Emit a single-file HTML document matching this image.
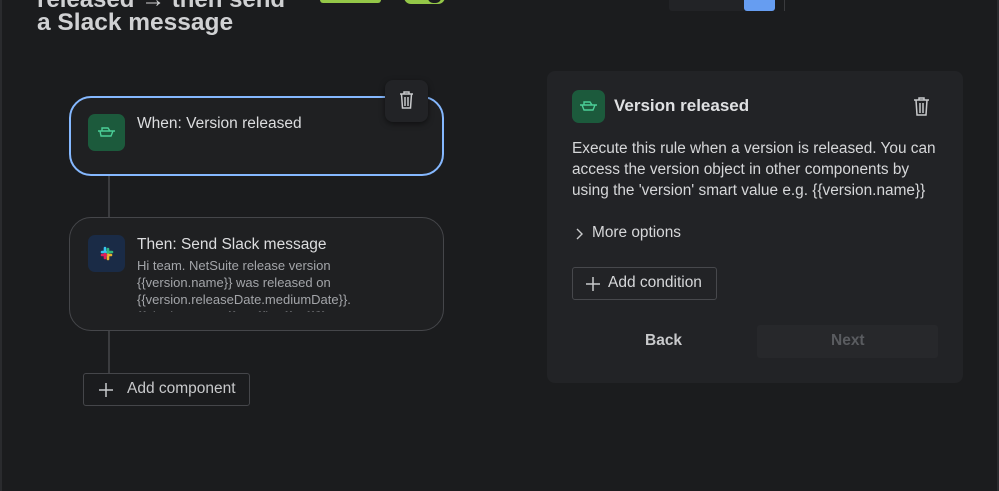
<!DOCTYPE html>
<html><head><meta charset="utf-8"><style>
*{box-sizing:border-box;margin:0;padding:0}
body{width:999px;height:491px;background:#1b1c1e;font-family:"Liberation Sans",sans-serif;color:#d8d9db;position:relative;overflow:hidden}
.abs{position:absolute}
.card{position:absolute;border-radius:22px;background:#1f2022}
.ico{position:absolute;width:37px;height:37px;border-radius:7px}
</style></head><body>
<div class="abs" style="left:0;top:0;width:2px;height:491px;background:#2a2b2e"></div>
<div class="abs" style="left:997px;top:0;width:2px;height:491px;background:#2a2b2e"></div>
<div class="abs" style="left:37px;top:-14px;font-size:24px;font-weight:bold;color:#d0d1d3;white-space:nowrap">released → then send</div>
<div class="abs" style="left:37px;top:9px;font-size:24.5px;font-weight:bold;color:#d0d1d3;white-space:nowrap">a Slack message</div>
<div class="abs" style="left:320px;top:-6px;width:61px;height:9px;background:#94c748;border-radius:3px"></div>
<div class="abs" style="left:404px;top:-10px;width:41px;height:14px;background:#94c748;border-radius:8px"></div>
<div class="abs" style="left:428px;top:-7px;width:13px;height:10px;background:#1b1c1e;border-radius:6px"></div>
<div class="abs" style="left:669px;top:-4px;width:76px;height:15px;background:#222326;border-radius:3px"></div>
<div class="abs" style="left:744px;top:-4px;width:31px;height:15px;background:#669df1;border-radius:3px"></div>
<div class="abs" style="left:784px;top:-2px;width:1px;height:13px;background:#3a3b3e"></div>

<div class="abs" style="left:108px;top:175px;width:2px;height:44px;background:#3b3c3f"></div>
<div class="abs" style="left:108px;top:330px;width:2px;height:44px;background:#3b3c3f"></div>

<div class="card" style="left:69px;top:96px;width:375px;height:80px;border:2px solid #85b8ff"></div>
<div class="ico" style="left:88px;top:114px;background:#1c5a3c">
<svg width="37" height="37" viewBox="0 0 37 37"><path d="M12 17h13l-2 5h-10zM14 17v-3h6l2 3M10 17h17" fill="none" stroke="#4bce97" stroke-width="1.4"/></svg></div>
<div class="abs" style="left:137px;top:115px;font-size:15.5px;color:#dcdddf">When: Version released</div>
<div class="abs" style="left:385px;top:80px;width:43px;height:42px;background:#222326;border-radius:8px;box-shadow:0 2px 6px rgba(0,0,0,.5)">
<svg width="43" height="42" viewBox="0 0 43 42"><path d="M15 14h13M19 14v-2h5v2M16.5 14l1 14h8l1-14M20 17v9M23 17v9" fill="none" stroke="#c8c9cb" stroke-width="1.5"/></svg></div>

<div class="card" style="left:69px;top:217px;width:375px;height:114px;border:1.5px solid #45464a"></div>
<div class="ico" style="left:88px;top:235px;background:#1a2b46">
<svg width="37" height="37" viewBox="0 0 37 37" stroke-linecap="round" stroke-width="2.6"><path d="M14 17h4" stroke="#36c5f0"/><path d="M17 13v4" stroke="#36c5f0"/><path d="M20 14v4" stroke="#2eb67d"/><path d="M20 17h4" stroke="#2eb67d"/><path d="M19 20h4" stroke="#ecb22e"/><path d="M20 20v4" stroke="#ecb22e"/><path d="M17 19v4" stroke="#e01e5a"/><path d="M14 20h4" stroke="#e01e5a"/></svg></div>
<div class="abs" style="left:137px;top:236px;font-size:15.5px;color:#dcdddf">Then: Send Slack message</div>
<div class="abs" style="left:137px;top:257px;width:300px;height:55px;overflow:hidden;font-size:13px;line-height:17px;color:#a3a5a9">Hi team. NetSuite release version<br>{{version.name}} was released on<br>{{version.releaseDate.mediumDate}}.<br>{{#lookupIssues}} - &lt;{{key}}&gt; {{/}}</div>

<div class="abs" style="left:83px;top:373px;width:167px;height:33px;border:1px solid #45464a;border-radius:3px"></div>
<svg class="abs" style="left:97px;top:381px" width="18" height="18"><path d="M9 2v14M2 9h14" stroke="#c8c9cb" stroke-width="1.5"/></svg>
<div class="abs" style="left:127px;top:380px;font-size:15.5px;color:#c8c9cb">Add component</div>

<div class="abs" style="left:547px;top:71px;width:416px;height:312px;background:#222326;border-radius:8px"></div>
<div class="ico" style="left:572px;top:90px;width:33px;height:33px;background:#1c5a3c">
<svg width="33" height="33" viewBox="0 0 33 33"><path d="M10 15h13l-2 5h-9zM12 15v-3h6l2 3M8 15h17" fill="none" stroke="#4bce97" stroke-width="1.4"/></svg></div>
<div class="abs" style="left:614px;top:96px;font-size:17px;font-weight:bold;color:#dfe0e2">Version released</div>
<svg class="abs" style="left:910px;top:95px" width="24" height="24" viewBox="0 0 24 24"><path d="M4 5h15M9 5V3h5v2M6 5l1 15h9l1-15M10 8v10M13 8v10" fill="none" stroke="#c8c9cb" stroke-width="1.5"/></svg>
<div class="abs" style="left:572px;top:138px;width:368px;font-size:15.4px;line-height:21px;color:#d6d7d9">Execute this rule when a version is released. You can access the version object in other components by using the 'version' smart value e.g. {{version.name}}</div>
<svg class="abs" style="left:574px;top:227px" width="10" height="14"><path d="M3 2l5 5-5 5" fill="none" stroke="#c8c9cb" stroke-width="1.4"/></svg>
<div class="abs" style="left:592px;top:224px;font-size:15.4px;color:#d6d7d9">More options</div>
<div class="abs" style="left:572px;top:267px;width:145px;height:33px;border:1px solid #47484c;border-radius:3px"></div>
<svg class="abs" style="left:584px;top:275px" width="18" height="18"><path d="M9 2v14M2 9h14" stroke="#c8c9cb" stroke-width="1.5"/></svg>
<div class="abs" style="left:608px;top:274px;font-size:15.5px;color:#d6d7d9">Add condition</div>
<div class="abs" style="left:645px;top:332px;font-size:15.5px;font-weight:bold;color:#c8c9cb">Back</div>
<div class="abs" style="left:757px;top:325px;width:181px;height:33px;background:#27282b;border-radius:3px"></div>
<div class="abs" style="left:831px;top:332px;font-size:15.5px;font-weight:bold;color:#5a5c60">Next</div>
</body></html>
